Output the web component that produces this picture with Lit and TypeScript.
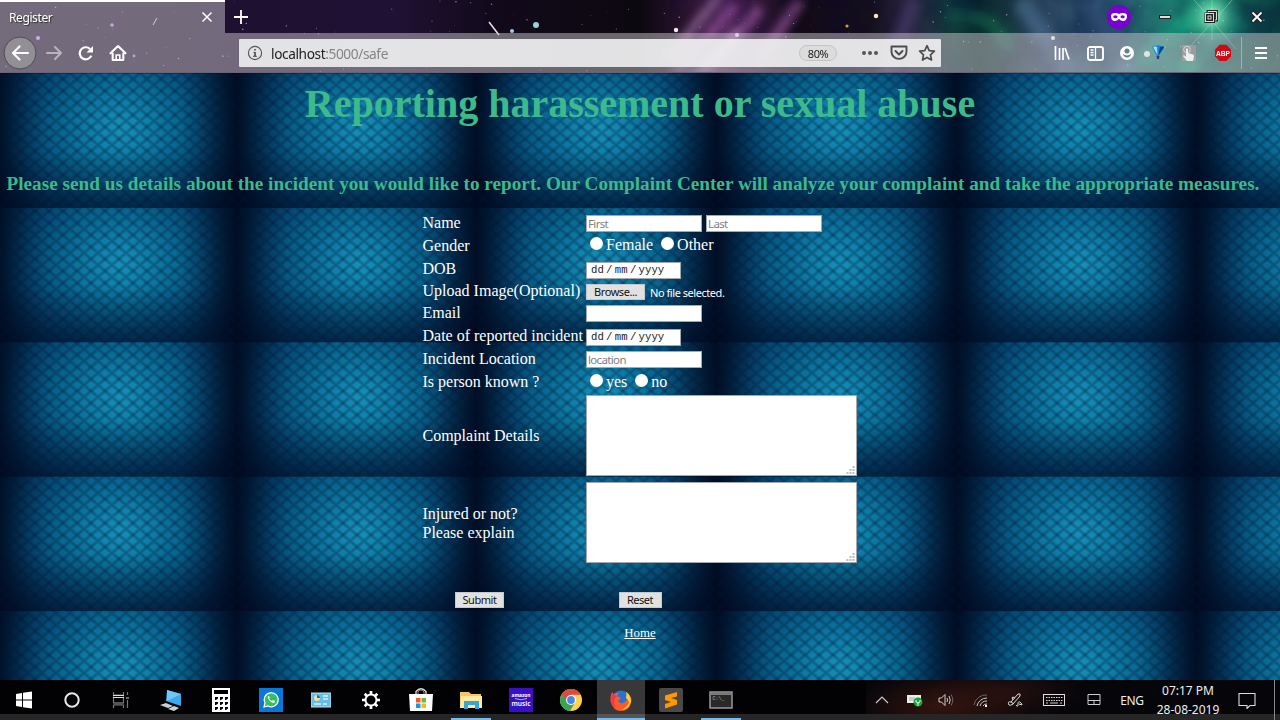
import { LitElement, html, css, svg, nothing } from "lit";
import { customElement } from "lit/decorators.js";

const icon = (w: number, h: number, body: unknown) =>
  html`<svg width=${w} height=${h} viewBox="0 0 ${w} ${h}" fill="none">${body}</svg>`;

// Deterministic star field scattered over the window theme
const stars = Array.from({ length: 190 }, (_, i) => {
  const r = (n: number) => {
    const v = Math.sin(i * 12.9898 + n * 78.233) * 43758.5453;
    return v - Math.floor(v);
  };
  return { x: r(1) * 1280, y: r(2) * 73, s: 0.3 + r(3) * 0.5, o: 0.25 + r(4) * 0.45 };
});

@customElement("theme-sky")
class ThemeSky extends LitElement {
  static styles = css`
    :host { display: block; width: 1280px; height: 73px; overflow: hidden; }
    svg { display: block; }
  `;
  render() {
    return html`<svg width="1280" height="73" viewBox="0 0 1280 73">
      <defs>
        <linearGradient id="base">
          <stop offset="0" stop-color="#20142f" /><stop offset=".18" stop-color="#1d1030" />
          <stop offset=".31" stop-color="#1f1133" /><stop offset=".38" stop-color="#120a1c" />
          <stop offset=".5" stop-color="#0c080f" /><stop offset=".53" stop-color="#241129" />
          <stop offset=".57" stop-color="#4a2153" /><stop offset=".62" stop-color="#120b18" />
          <stop offset=".68" stop-color="#140f1d" /><stop offset=".71" stop-color="#282441" />
          <stop offset=".745" stop-color="#123b3b" /><stop offset=".765" stop-color="#0b2d2c" />
          <stop offset=".82" stop-color="#2b4460" /><stop offset=".87" stop-color="#2f6276" />
          <stop offset=".925" stop-color="#19806d" /><stop offset="1" stop-color="#0d4a42" />
        </linearGradient>
        <radialGradient id="glow">
          <stop offset="0" stop-color="#eafff0" /><stop offset=".25" stop-color="#72e0b0" stop-opacity=".85" />
          <stop offset="1" stop-color="#20a080" stop-opacity="0" />
        </radialGradient>
        <filter id="b4" filterUnits="userSpaceOnUse" x="600" y="-40" width="720" height="160"><feGaussianBlur stdDeviation="5" /></filter>
        <filter id="cloud" x="0" y="0" width="100%" height="100%">
          <feTurbulence type="fractalNoise" baseFrequency=".016 .016" numOctaves="4" seed="8" />
          <feColorMatrix values="0 0 0 0 0  0 0 0 0 0  0 0 0 0 .04  3 0 0 0 -1.15" />
        </filter>
      </defs>
      <rect width="1280" height="73" fill="url(#base)" />
      <g filter="url(#b4)" fill="none">
        <path d="M675 75L735 5M705 75L760 8M760 60L800 0" stroke="#b060b4" stroke-width="11" opacity=".6" />
        <path d="M668 60L720 -5M690 80L740 30" stroke="#d9a5dc" stroke-width="7" opacity=".6" />
        <path d="M885 75L915 0" stroke="#4b3b70" stroke-width="13" opacity=".6" />
        <path d="M1020 0L1070 75M1090 0L1130 75" stroke="#527aa0" stroke-width="18" opacity=".5" />
        <path d="M1140 60L1220 0M1180 70L1245 20" stroke="#1cb78e" stroke-width="18" opacity=".5" />
        <path d="M945 15Q995 10 1010 50" stroke="#12624a" stroke-width="14" opacity=".7" />
      </g>
      <rect x="670" width="610" height="73" filter="url(#cloud)" opacity=".3" />
      <circle cx="1212" cy="16" r="32" fill="url(#glow)" />
      <path d="M1185 52L1245 -14M1190 -5L1236 49M1212 0V40" stroke="#9ff5cb" stroke-width=".8" opacity=".5" />
      ${stars.map((p) => svg`<circle cx=${p.x} cy=${p.y} r=${p.s} fill="#eadff5" opacity=${p.o} />`)}
      <path d="M489 22L499 35" stroke="#e8e4ee" stroke-width="1.5" />
      <circle cx="536" cy="25" r="3" fill="#9fd0db" /><circle cx="512" cy="31" r="2" fill="#9fc9f0" />
      <circle cx="676" cy="30" r="2.2" fill="#f4e5ec" /><circle cx="876" cy="16" r="2.2" fill="#ffe8bc" />
      <circle cx="847" cy="26" r="1.6" fill="#d89a52" /><circle cx="112" cy="25" r="1.8" fill="#b28cff" />
      <circle cx="38" cy="38" r="2" fill="#c9a4ff" /><circle cx="737" cy="35" r="2" fill="#efe7f8" />
      <circle cx="1053" cy="38" r="2" fill="#fff" /><circle cx="1147" cy="54" r="3" fill="#fff" />
      <circle cx="134" cy="56" r="1.4" fill="#a68af0" /><path d="M157 18L153 25" stroke="#ddd" />
    </svg>`;
  }
}

@customElement("browser-chrome")
class BrowserChrome extends LitElement {
  static styles = css`
    :host { display: block; position: relative; height: 73px; font-family: "Noto Sans", sans-serif; color: #fff; overflow: hidden; }
    theme-sky { position: absolute; left: 0; top: 0; }
    .bars { position: relative; }
    .row { display: flex; align-items: center; }
    .titlebar { height: 33px; }
    .tab { width: 225px; height: 33px; box-sizing: border-box; border-top: 2px solid #fff; background: rgba(200, 195, 200, .5);
      display: flex; align-items: center; justify-content: space-between; padding: 0 12px 1px 9px; }
    .name { font-size: 12px; letter-spacing: -.4px; text-shadow: 1px 1px 1px #333; }
    .cell { display: flex; align-items: center; justify-content: center; flex: none; }
    .grow { flex: 1; }
    .w27 { width: 27px; } .w28 { width: 28px; } .w30 { width: 30px; } .w32 { width: 32px; } .w33 { width: 33px; }
    .w36 { width: 36px; } .w37 { width: 37px; } .w38 { width: 38px; } .w40 { width: 40px; } .w46 { width: 46px; }
    .nav { height: 40px; background: rgba(200, 195, 200, .5); box-sizing: border-box; border-bottom: 1px solid #6a6375; }
    .nav .cell { padding-top: 1px; }
    .left { width: 239px; }
    .url { width: 702px; height: 28px; flex: none; box-sizing: border-box; background: rgba(245, 245, 246, .87); color: #222;
      padding: 0 0 0 8px; border-radius: 1px; }
    .host { font-size: 13.7px; letter-spacing: -.4px; margin-left: 8px; padding-top: 1px; }
    .path { color: #858387; }
    .zoom { width: 36px; height: 14px; border: 1px solid #c5c3c6; border-radius: 9px; background: #dddcdd;
      font-size: 11px; line-height: 15px; text-align: center; margin: 1px 18px 0 0; letter-spacing: -.4px; }
    .sep { width: 1px; height: 32px; background: rgba(255, 255, 255, .35); }
    .lib { padding-right: 0; }
    svg { display: block; }
  `;
  render() {
    return html`<theme-sky></theme-sky>
      <div class="bars">
        <div class="row titlebar">
          <div class="tab"><span class="name">Register</span>${icon(12, 12, svg`<path d="M1.500 1.500l9 9m0-9l-9 9" stroke="#fff" stroke-width="1.500"/>`)}</div>
          <div class="cell w32">${icon(14, 14, svg`<path d="M7 0v14M0 7h14" stroke="#fff" stroke-width="1.800"/>`)}</div>
          <div class="grow"></div>
          <div class="cell w46">${icon(24, 24, svg`<circle cx="12" cy="12" r="12" fill="#7800d1"/><path d="M4 11q0-3 4-3 2.700 0 4 1 1.300-1 4-1 4 0 4 3 0 5-4 5-2 0-4-2-2 2-4 2-4 0-4-5z" fill="#fff"/><ellipse cx="8.400" cy="11.800" rx="2.100" ry="1.500" fill="#7800d1"/><ellipse cx="15.600" cy="11.800" rx="2.100" ry="1.500" fill="#7800d1"/>`)}</div>
          <div class="cell w46">${icon(14, 6, svg`<rect x="1.500" y="1.500" width="11" height="3" fill="#ddd" stroke="#222"/>`)}</div>
          <div class="cell w46">${icon(14, 14, svg`<path d="M4 3V1.500h8.500V10H11" stroke="#222" stroke-width="2.800"/><path d="M4 3V1.500h8.500V10H11" stroke="#ddd"/><rect x="1.500" y="3.500" width="8.500" height="8.500" fill="#222" stroke="#222" stroke-width="2"/><rect x="1.500" y="3.500" width="8" height="8" stroke="#ddd"/><rect x="4" y="6" width="3" height="3" stroke="#ddd"/>`)}</div>
          <div class="cell w46">${icon(14, 14, svg`<path d="M2 2l10 10m0-10L2 12" stroke="#222" stroke-width="4"/><path d="M2.500 2.500l9 9m0-9l-9 9" stroke="#fff" stroke-width="1.800"/>`)}</div>
        </div>
        <div class="row nav">
          <div class="row left">
            <div class="cell w40">${icon(34, 34, svg`<circle cx="17" cy="17" r="16" fill="#929096" stroke="#504a56"/><path d="M25 17H10m6.500-6.500L10 17l6.500 6.500" stroke="#fff" stroke-width="2.200" stroke-linecap="round" stroke-linejoin="round"/>`)}</div>
            <div class="cell w27">${icon(18, 16, svg`<path d="M2 8h14m-6-6l6 6-6 6" stroke="#b9b3bd" stroke-width="2" stroke-linecap="round" stroke-linejoin="round"/>`)}</div>
            <div class="cell w37">${icon(16, 16, svg`<path d="M13.300 10.300A6 6 0 1 1 12 3.700" stroke="#fff" stroke-width="2.200" transform="translate(0 .3)"/><path d="M15 1v6.500H8.500z" fill="#fff"/>`)}</div>
            <div class="cell w27">${icon(18, 18, svg`<path d="M1.500 9.300L9 2l7.500 7.300M3.700 9.500V16h10.600V9.500" stroke="#fff" stroke-width="2.100" stroke-linecap="round" stroke-linejoin="round"/><path d="M7.200 16v-5h3.600v5" stroke="#fff" stroke-width="1.600"/>`)}</div>
          </div>
          <div class="row url">
            ${icon(16, 16, svg`<circle cx="8" cy="8" r="6.600" stroke="#555" stroke-width="1.100"/><path d="M8 7v4.500" stroke="#444" stroke-width="1.600"/><path d="M6.500 7.400H8M6 11.300h4" stroke="#444" stroke-width=".9"/><path d="M8 4v1.600" stroke="#444" stroke-width="1.600"/>`)}
            <span class="host">localhost<span class="path">:5000/safe</span></span>
            <div class="grow"></div>
            <span class="zoom">80%</span>
            <div class="cell w30">${icon(18, 6, svg`<circle cx="3" cy="3" r="2" fill="#555"/><circle cx="9" cy="3" r="2" fill="#555"/><circle cx="15" cy="3" r="2" fill="#555"/>`)}</div>
            <div class="cell w28">${icon(24, 18, svg`<path d="M4.500 2.500h15v5.200a7.500 7.200 0 0 1-15 0z" stroke="#4c4c4e" stroke-width="1.900" stroke-linejoin="round"/><path d="M8.500 7l3.500 3.500L15.500 7" stroke="#4c4c4e" stroke-width="2" stroke-linecap="round" stroke-linejoin="round"/>`)}</div>
            <div class="cell w28">${icon(18, 18, svg`<path d="M9 1.700l2.200 4.900 5.200.6-3.900 3.600 1 5.200L9 13.400 4.500 16l1-5.200-3.900-3.600 5.200-.6z" stroke="#4c4c4e" stroke-width="1.700" stroke-linejoin="round"/>`)}</div>
          </div>
          <div class="grow"></div>
          <div class="cell w36">${icon(16, 14, svg`<path d="M1.500 0v14M5.500 2v12M9 2v12M11 2l4 11.500" stroke="#fff" stroke-width="1.700"/>`)}</div>
          <div class="cell w30">${icon(17, 15, svg`<rect x="1" y="1" width="15" height="13" rx="2" stroke="#fff" stroke-width="1.900"/><path d="M8.500 1v13M3.500 4h3M3.500 6.500h3M3.500 9h3" stroke="#fff" stroke-width="1.300"/>`)}</div>
          <div class="cell w33">${icon(14, 14, svg`<circle cx="7" cy="7" r="7" fill="#fff"/><circle cx="7" cy="5" r="2.500" fill="#618283"/><path d="M2.700 7.800Q7 11 11.300 7.800Q10 11.500 7 11.500T2.700 7.800z" fill="#618283"/>`)}</div>
          <div class="cell w30">${icon(14, 16, svg`<path d="M1 2Q7-1.500 13 2L8 11H6z" fill="#1483d8"/><path d="M2 2q3-1 4 0l.5 8z" fill="#a4ddff"/><path d="M9 2l3-.5q1 0 1 1l-5.500 7.500z" fill="#063b8e"/><path d="M5.500 11h3l-.5 3H6z" fill="#393f58"/>`)}</div>
          <div class="cell w32">${icon(16, 17, svg`<rect x="1" width="14" height="16" fill="#aa9fa0" opacity=".75"/><circle cx="6" cy="4.500" r="3.300" stroke="#d8d4d4"/><path d="M5 12V4q1-1.500 2 0v4l5 1.500q1 0 1 2l-1 4.500H6L2 11q1-2 3 1z" fill="#eee"/>`)}</div>
          <div class="cell w36">${icon(18, 18, svg`<path d="M5.700.800h6.600l4.700 4.700v6.800L12.300 17H5.700L1 12.300V5.500z" fill="#cf0a13"/><text x="9" y="11.800" text-anchor="middle" textLength="14" lengthAdjust="spacingAndGlyphs" font-family="Liberation Sans" font-weight="700" font-size="8" fill="#fff">ABP</text>`)}</div>
          <div class="sep"></div>
          <div class="cell w38">${icon(14, 12, svg`<path d="M1 1h12M1 6h12M1 11h12" stroke="#fff" stroke-width="1.900"/>`)}</div>
        </div>
      </div>`;
  }
}

@customElement("report-form")
class ReportForm extends LitElement {
  static styles = css`
    :host { display: block; height: 607px; overflow: hidden; font-family: "Liberation Serif", "Times New Roman", serif; color: #fff;
      background:
        linear-gradient(to top right, transparent 36%, rgba(0, 20, 50, .32) 50%, transparent 64%) 0 0 / 14px 12px,
        linear-gradient(to bottom right, transparent 36%, rgba(0, 20, 50, .32) 50%, transparent 64%) 0 0 / 14px 12px,
        linear-gradient(transparent 58%, rgba(0, 6, 28, .5) 100%) 0 .5px / 240px 134.4px,
        linear-gradient(90deg, rgba(0, 4, 22, .76), rgba(0, 4, 22, .42) 7%, rgba(0, 4, 22, .14) 14%, transparent 21%, transparent 76%, rgba(0, 4, 22, .18) 84%, rgba(0, 4, 22, .5) 92%, rgba(0, 4, 22, .8) 99%) -2px .5px / 240px 134.4px,
        radial-gradient(ellipse 145px 125px at 51% 41%, #1790b8 0, #0f7fa9 20%, #08658f 42%, #054a75 62%, #03345a 82%, #022543 100%) -2px .5px / 240px 134.4px; }
    h1 { margin: 0; padding-top: 8px; height: 46px; font-size: 40px; line-height: 46px; text-align: center; color: #3dba8b; white-space: nowrap; }
    h2 { margin: 0; padding: 45px 0 0 6.5px; height: 24px; font-size: 19.2px; letter-spacing: .013px; line-height: 24px; color: #3dba8b; white-space: nowrap; }
    .table { display: grid; grid-template-columns: 163.500px auto; grid-template-rows: 22px 24px 22px 22px 23px 23px 22px 22px 87px 87px 60px;
      padding: 16px 0 0 422.500px; font-size: 16px; }
    .label { display: flex; align-items: center; line-height: 19px; white-space: nowrap; }
    .cell { display: flex; align-items: center; white-space: nowrap; }
    .center { justify-content: flex-start; padding-left: 32.5px; }
    .inp { box-sizing: border-box; width: 116px; height: 17px; padding: 1px; margin: 0 4px 0 0; border: 1px solid #a4a8ac; border-radius: 0;
      background: #fff; font: 11.5px "Noto Sans", sans-serif; letter-spacing: -.65px; color: #222; outline: none; }
    .inp::placeholder { color: #808080; opacity: 1; }
    .date { box-sizing: border-box; width: 95px; height: 17px; border: 1px solid #a4a8ac; background: #fff; color: #222;
      font: 10.67px/15px "Liberation Mono", monospace; padding-left: 4px; display: flex; gap: 2.300px; }
    .radio { appearance: none; width: 13px; height: 13px; border-radius: 50%; background: #fff; margin: 0 3px 3px 4px; }
    .second { margin-left: 8px; }
    .btn { box-sizing: border-box; height: 16px; padding: 0; border: 1px solid #c6c9cb; border-radius: 0; background: #e1e1e1; color: #111;
      font: 11px/14px "Noto Sans", sans-serif; letter-spacing: -.45px; }
    .browse { width: 59px; margin-right: 5px; } .submit { width: 49px; } .reset { width: 43px; }
    .none { font: 11px "Noto Sans", sans-serif; letter-spacing: -.45px; }
    .area { position: relative; width: 271px; height: 81px; margin-bottom: 1px; }
    .area textarea { display: block; box-sizing: border-box; width: 271px; height: 81px; border: 1px solid #a4a8ac; background: #fff; resize: none; outline: none; }
    .area svg { position: absolute; right: 2px; bottom: 2px; }
    .home { display: block; width: max-content; margin: 0 auto; font-size: 12.8px; line-height: 15px; color: #fff; }
    .up { padding-bottom: 2px; } .up1 { padding-bottom: 1px; } .dn { padding-top: 2px; } .btns { padding-top: 8px; }
  `;
  private area() {
    return html`<div class="area"><textarea></textarea>${icon(9, 8, svg`<path d="M6.500 0h2v2h-2zM3.500 3h2v2h-2zM6.500 3h2v2h-2zM.5 6h2v2h-2zM3.500 6h2v2h-2zM6.500 6h2v2h-2z" fill="#bdbdbd"/>`)}</div>`;
  }
  private date() {
    return html`<div class="date"><span>dd</span><span>/</span><span>mm</span><span>/</span><span>yyyy</span></div>`;
  }
  private radios(name: string, a: string, b: string) {
    return html`<input class="radio" type="radio" name=${name} />${a}<input class="radio second" type="radio" name=${name} />${b}`;
  }
  private text(placeholder = "") {
    return html`<input class="inp" placeholder=${placeholder || nothing} />`;
  }
  render() {
    return html`<h1>Reporting harassement or sexual abuse</h1>
      <h2>Please send us details about the incident you would like to report. Our Complaint Center will analyze your complaint and take the appropriate measures.</h2>
      <div class="table">
        <div class="label up1">Name</div><div class="cell">${this.text("First")}${this.text("Last")}</div>
        <div class="label up">Gender</div><div class="cell up">${this.radios("gender", "Female", "Other")}</div>
        <div class="label up1">DOB</div><div class="cell dn">${this.date()}</div>
        <div class="label up">Upload Image(Optional)</div><div class="cell dn"><button class="btn browse">Browse...</button><span class="none">No file selected.</span></div>
        <div class="label up">Email</div><div class="cell">${this.text()}</div>
        <div class="label up">Date of reported incident</div><div class="cell dn">${this.date()}</div>
        <div class="label up">Incident Location</div><div class="cell">${this.text("location")}</div>
        <div class="label">Is person known ?</div><div class="cell dn">${this.radios("known", "yes", "no")}</div>
        <div class="label">Complaint Details</div><div class="cell">${this.area()}</div>
        <div class="label">Injured or not?<br />Please explain</div><div class="cell">${this.area()}</div>
        <div class="cell center btns"><button class="btn submit">Submit</button></div><div class="cell center btns"><button class="btn reset">Reset</button></div>
      </div>
      <a class="home" href="#">Home</a>`;
  }
}

const apps: { art: unknown; state?: string }[] = [
  { state: "narrow", art: icon(18, 18, svg`<path d="M1 3l6-1v6.500H1zM8 1.800L17 .5v8H8zM1 9.500h6V16l-6-1zM8 9.500h9v8l-9-1.300z" fill="#fff"/>`) },
  { state: "narrow", art: icon(18, 18, svg`<circle cx="9" cy="9" r="6.700" stroke="#e8e8e8" stroke-width="2"/>`) },
  { art: icon(18, 18, svg`<path d="M1.500 1v3h10V1M1.500 17v-3h10v3M1.500 5.500v7M11.500 5.500v7M15.500 1v3M15.500 9v8" stroke="#777" stroke-width="1.200"/><path d="M1 4.500h11M1 6.500h11M14 7h3" stroke="#ddd"/><path d="M2 11h9v3H2z" fill="#555"/>`) },
  { art: icon(24, 24, svg`<path d="M8 2l14 4v12L7 13z" fill="#3ba9ed"/><path d="M8 2l14 4-14 7z" fill="#70c6f7"/><path d="M1 17l6-2 7 3-5 2zM9 21l6-3 5 2-5 3z" fill="#ccd2d5"/>`) },
  { art: icon(18, 24, svg`<path d="M0 0h18v24H0z" fill="#fff"/><path d="M2 2h14v4H2zM3 9h3v1.500L4 12H3zM8 9h3v1.500L9 12H8zM13 9h3v1.500L14 12h-1zM3 14h3v1.500L4 17H3zM8 14h3v1.500L9 17H8zM13 14h3v1.500L14 17h-1zM3 19h3v1.500L4 22H3zM8 19h3v1.500L9 22H8zM13 19h3v1.500L14 22h-1z" fill="#000"/>`) },
  { art: icon(24, 24, svg`<path d="M0 0h24v24H0z" fill="#0877d8"/><path d="M5 19l1-4a7 7 0 1 1 3 3z" fill="#33bf64" stroke="#fff" stroke-width="1.200"/><path d="M9.300 8q-1 1 .2 3.200 2 3.300 5 3.800 1.500 0 1.500-2l-2-1-1 1q-2-.6-3-2.700l.8-.8-.8-1.600z" fill="#fff"/>`) },
  { art: icon(20, 16, svg`<path d="M0 1h20v14H0z" fill="#67bce8" stroke="#bce4f7"/><circle cx="6" cy="6" r="3" fill="#f1e1a0"/><path d="M6 6V3a3 3 0 0 1 3 3z" fill="#1673ad"/><path d="M12 4h5M12 7h5M3 12h7M12 12h4" stroke="#d8f1ff" stroke-width="1.400"/>`) },
  { art: icon(20, 20, svg`<circle cx="10" cy="10" r="5.500" stroke="#fff" stroke-width="2"/><path d="M15.500 10h3.500M1 10h3.500M10 4.500V1M10 19v-3.500M13.800 13.800l2.500 2.500M6.200 13.800l-2.500 2.500M13.800 6.200l2.500-2.500M6.200 6.200L3.700 3.700" stroke="#fff" stroke-width="2.700"/>`) },
  { art: icon(24, 24, svg`<path d="M7 7V3.500Q12-2 17 3.500V7" stroke="#ddd" stroke-width="1.300"/><path d="M9 7V4q3-4 6 0v3" stroke="#888"/><path d="M0 6h24l-1 17H1z" fill="#fff"/><path d="M7 10h4.500v4.500H7z" fill="#ed5c2c"/><path d="M12.500 10H17v4.500h-4.500z" fill="#76b729"/><path d="M7 15.500h4.500V20H7z" fill="#1699df"/><path d="M12.500 15.500H17V20h-4.500z" fill="#fbb715"/>`) },
  { state: "open", art: icon(22, 20, svg`<path d="M0 2h9l2 2h10v14H0z" fill="#f0c85c"/><path d="M1 6h21v12H0z" fill="#ffe8a0"/><path d="M4 11h15v8h-4v-4H8v4H4z" fill="#38a5d9"/>`) },
  { art: icon(24, 24, svg`<path d="M0 0h24v24H0z" fill="#3910c5"/><text x="12" y="9" text-anchor="middle" textLength="19" lengthAdjust="spacingAndGlyphs" font-family="Noto Sans" font-weight="700" font-size="5.500" fill="#fff">amazon</text><path d="M6 10.500q6 2.500 12 0" stroke="#bba7ff"/><text x="12" y="18" text-anchor="middle" textLength="19" lengthAdjust="spacingAndGlyphs" font-family="Noto Sans" font-weight="600" font-size="7" fill="#fff">music</text>`) },
  { art: icon(22, 22, svg`<circle cx="11" cy="11" r="11" fill="#ffd34a"/><path d="M11 11L1.500 5.500A11 11 0 0 1 20.500 5.500H11z" fill="#db4b3f"/><path d="M1.500 5.500A11 11 0 0 0 10 22l5-8.500-8-.3z" fill="#39a457"/><path d="M1.500 5.500L6.500 14 11 7z" fill="#39a457"/><path d="M2 4.700L6 11l5-5.500h9.500A11 11 0 0 0 2 4.700z" fill="#db4b3f"/><circle cx="11" cy="11" r="5" fill="#fff"/><circle cx="11" cy="11" r="3.900" fill="#4a86ea"/>`) },
  { state: "open active", art: icon(24, 24, svg`<circle cx="12" cy="12" r="9.500" fill="#2573d5"/><path d="M3 4l2 3Q7 4 10 5L8 8l4 2-3 3q3 4 7 1 5-4 1-10 7 4 5 11-2 8-10 8T1.500 13Q1 8 3 4z" fill="#ff5a25"/><path d="M17 4q5 3 5 10-3 8-10 8 7-3 8-8-1-3-3-4 1-3 0-6z" fill="#ffd035"/><path d="M3 6q-3 9 4 14Q2 12 8 8L5 7z" fill="#f5314f"/>`) },
  { art: icon(24, 24, svg`<rect width="24" height="24" rx="2" fill="#494949"/><path d="M18 4v4.500L12 10l6 2v4.500L6 20.500V16l6-2-6-2V7.500z" fill="#ff9800"/>`) },
  { state: "open", art: icon(24, 18, svg`<rect x="1" y="1" width="22" height="16" fill="#292929" stroke="#999" stroke-width="1.500"/><path d="M2 3h20" stroke="#ccc"/><text x="3.500" y="9" font-family="Liberation Mono" font-size="5" fill="#bbb">C:\\_</text>`) },
];

@customElement("task-bar")
class TaskBar extends LitElement {
  static styles = css`
    :host { display: flex; height: 40px; background: linear-gradient(#020205 34px, #262626 34px); font-family: "Noto Sans", sans-serif; color: #eee; }
    .app { width: 50px; height: 40px; display: flex; align-items: center; justify-content: center; box-sizing: border-box; flex: none; }
    .narrow { width: 48px; }
    .open { background: linear-gradient(#76b9ed, #76b9ed) center bottom / 40px 2px no-repeat; }
    .open.active { background: linear-gradient(#76b9ed, #76b9ed) center bottom / 48px 2px no-repeat, linear-gradient(#38383b 34px, #545456 34px) center / 48px 40px no-repeat; }
    .grow { flex: 1; }
    .tray { display: flex; width: 414px; background: linear-gradient(transparent 34px, #262626 34px),
      radial-gradient(ellipse 90px 35px at 75px 26px, #35150f, transparent), radial-gradient(ellipse 80px 30px at 140px 12px, #24100f, transparent), #05050a; }
    .t { height: 40px; display: flex; align-items: center; justify-content: center; flex: none; white-space: nowrap; }
    .w26 { width: 26px; } .w28 { width: 28px; } .w32 { width: 32px; } .w34 { width: 34px; } .w42 { width: 42px; } .w52 { width: 52px; }
    .eng { width: 48px; font-size: 12px; letter-spacing: -.4px; }
    .clock { width: 64px; display: block; text-align: center; font-size: 12px; line-height: 18.500px; padding-top: 2px; box-sizing: border-box; }
    .note { width: 54px; } .edge { width: 6px; box-sizing: border-box; border-left: 1px solid #888; }
  `;
  render() {
    return html`${apps.map((a) => html`<div class="app ${a.state ?? ""}">${a.art}</div>`)}
      <div class="grow"></div>
      <div class="tray">
        <div class="t w32">${icon(14, 8, svg`<path d="M1 7l6-6 6 6" stroke="#ccc" stroke-width="1.200"/>`)}</div>
        <div class="t w34">${icon(18, 14, svg`<path d="M1 2h14v8H1z" fill="#eee"/><path d="M3 4h6v4H3z" fill="#ccc"/><circle cx="12" cy="9" r="4.500" fill="#17a33b"/><path d="M12 13V9m-2-2v2q2 2 4 0V7" stroke="#e7ffe7"/>`)}</div>
        <div class="t w28">${icon(16, 14, svg`<path d="M1 5h2.500L7 1.500v11L3.500 9H1z" stroke="#ccc"/><path d="M9 5q1 2 0 4M11 3q2.500 4 0 8" stroke="#ccc"/><path d="M13 1.500q3.500 5.500 0 11" stroke="#666"/>`)}</div>
        <div class="t w42">${icon(16, 16, svg`<path d="M1 13A12 12 0 0 1 14 3" stroke="#666"/><path d="M4 14A10 10 0 0 1 14 6M7 14A7 7 0 0 1 14 9M10 14A4 4 0 0 1 14 12" stroke="#ccc"/><path d="M12 13h2v2h-2z" fill="#fff"/>`)}</div>
        <div class="t w26">${icon(16, 16, svg`<path d="M2 13q-2-4 2-3l7-8q3-1 2 2l-7 8q-3 2-4 1zM4 10l3 2M6 8q-2-3 0-3l2 1M9 13q2 3 2-1t3-1-2 1" stroke="#ddd"/>`)}</div>
        <div class="t w52">${icon(24, 14, svg`<rect x="1.500" y="1.500" width="21" height="11" stroke="#ddd"/><path d="M4 4.500h17M4 7.500h17" stroke="#ddd" stroke-width="1.200" stroke-dasharray="1.500 1"/><path d="M4 10h2M8 10h8M18 10h2" stroke="#ccc"/>`)}</div>
        <div class="t w28">${icon(14, 14, svg`<path d="M1 1.500h12v10H1zM1 7.500h12M7 7.500v4" stroke="#ccc"/>`)}</div>
        <div class="t eng">ENG</div>
        <div class="t clock">07:17 PM<br />28-08-2019</div>
        <div class="t note">${icon(18, 17, svg`<path d="M1 1.500h16v12h-5L9 16.500v-3H1z" stroke="#ddd" stroke-width="1.100"/>`)}</div>
        <div class="t edge"></div>
      </div>`;
  }
}

@customElement("app-root")
class AppRoot extends LitElement {
  static styles = css`
    :host { display: block; width: 1280px; height: 720px; overflow: hidden; background: #000; }
  `;
  render() {
    return html`<browser-chrome></browser-chrome><report-form></report-form><task-bar></task-bar>`;
  }
}
